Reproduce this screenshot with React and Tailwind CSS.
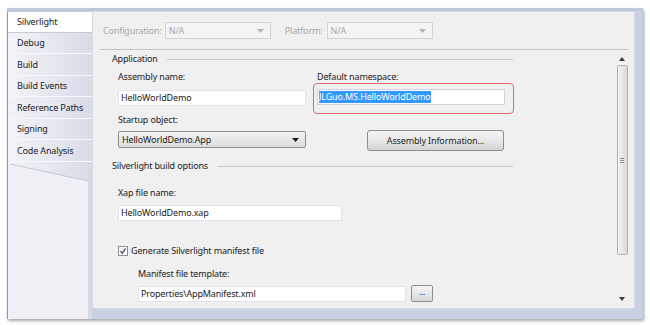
import React from "react";

const tabs = [
  "Silverlight",
  "Debug",
  "Build",
  "Build Events",
  "Reference Paths",
  "Signing",
  "Code Analysis",
];

function Combo({ value, disabled, className = "" }) {
  return (
    <div
      className={`flex items-center justify-between h-[17px] px-[3px] border ${
        disabled
          ? "border-[#d4d4d4] bg-[#f4f4f4] text-[#a8a8a8]"
          : "border-[#8e8f8f] bg-gradient-to-b from-[#f2f2f2] to-[#dcdcdc] text-[#1e1e1e] rounded-[2px]"
      } ${className}`}
    >
      <span>{value}</span>
      <svg width="7" height="4" viewBox="0 0 7 4" className="mr-[3px]">
        <path d="M0 0h7L3.5 4z" fill={disabled ? "#b4b4b4" : "#1e1e1e"} />
      </svg>
    </div>
  );
}

function TextBox({ value, className = "" }) {
  return (
    <div
      className={`h-[16px] flex items-center px-[2px] bg-white border border-[#e2e3ea] ${className}`}
    >
      {value}
    </div>
  );
}

function GroupHeader({ title }) {
  return (
    <div className="flex items-center h-[14px] ml-[19px] w-[401px]">
      <span className="mr-[9px]">{title}</span>
      <div className="flex-1 h-px bg-[#c9c9c9]" />
    </div>
  );
}

function Label({ children, className = "" }) {
  return <div className={`h-[14px] flex items-center ${className}`}>{children}</div>;
}

function Scrollbar() {
  return (
    <div className="w-[12px] h-full flex flex-col items-center bg-[#f0f0f0]">
      <svg width="6" height="4" viewBox="0 0 6 4" className="mt-[5px]">
        <path d="M0 4h6L3 0z" fill="#3a3a3a" />
      </svg>
      <div className="mt-[4px] w-[11px] h-[190px] rounded-[2px] border border-[#b0b0b0] bg-gradient-to-r from-[#f4f4f4] via-[#e6e6e6] to-[#d8d8d8] flex items-center justify-center">
        <div className="flex flex-col gap-[1px]">
          <div className="w-[4px] h-px bg-[#8c8c8c]" />
          <div className="w-[4px] h-px bg-[#8c8c8c]" />
          <div className="w-[4px] h-px bg-[#8c8c8c]" />
        </div>
      </div>
      <div className="flex-1" />
      <svg width="6" height="4" viewBox="0 0 6 4" className="mb-[6px]">
        <path d="M0 0h6L3 4z" fill="#3a3a3a" />
      </svg>
    </div>
  );
}

function TabColumn() {
  return (
    <div className="w-[85px] flex flex-col bg-gradient-to-r from-[#f3f4f8] to-[#d8dce7] border-l border-[#8f99ad] rounded-tl-[3px]">
      {tabs.map((t, i) => (
        <div
          key={t}
          className={`h-[21.5px] flex items-center pl-[9px] ${
            i === 0
              ? "bg-white border-y border-[#c6cbd8] -mr-[1px]"
              : "border-b border-[#f7f8fb]"
          }`}
        >
          {t}
        </div>
      ))}
      <svg
        width="85"
        height="150"
        viewBox="0 0 85 150"
        className="flex-1"
        preserveAspectRatio="none"
      >
        <path d="M0 2L80 18V150H0z" fill="#eef0f5" />
        <path d="M2 2L80 18" stroke="#c4c9d6" strokeWidth="1" fill="none" />
        <rect x="80" y="0" width="5" height="150" fill="#d6dae5" />
      </svg>
    </div>
  );
}

export default function App() {
  return (
    <div
      className="w-[650px] h-[325px] bg-white pl-[7px] pt-[8px] text-[9px] tracking-[-0.15px] text-[#222]"
      style={{ fontFamily: '"Segoe UI", "Noto Sans", sans-serif' }}
    >
      <div className="w-[636px] h-[311px] flex border-t-[3px] border-r-[1px] border-[#bfc8da] shadow-[1px_2px_3px_rgba(0,0,0,0.35)] bg-[#c9d1e2]">
        <TabColumn />
        {/* content page */}
        <div className="flex-1 flex flex-col pr-[7px] pb-[10px] bg-[#c9d1e2]">
          <div className="flex-1 flex flex-col bg-[#f0f0f0] border border-[#d6d9e1]">
            {/* configuration row */}
            <div className="h-[37px] flex items-center pl-[10px] text-[#a8a8a8]">
              <span>Configuration:</span>
              <Combo value="N/A" disabled className="ml-[3px] w-[106px]" />
              <span className="ml-[14px]">Platform:</span>
              <Combo value="N/A" disabled className="ml-[4px] w-[106px]" />
            </div>
            <div className="ml-[7px] mr-[6px] h-px bg-[#c4c4c4]" />
            {/* scroll area */}
            <div className="flex-1 flex pt-[2px]">
              <div className="flex-1 flex flex-col">
                <GroupHeader title="Application" />
                <div className="flex ml-[25px] mt-[4px]">
                  <div className="w-[188px] flex flex-col">
                    <Label>Assembly name:</Label>
                    <TextBox value="HelloWorldDemo" className="mt-[6px]" />
                    <Label className="mt-[7px]">Startup object:</Label>
                    <Combo value="HelloWorldDemo.App" className="mt-[4px] h-[16px]" />
                  </div>
                  <div className="ml-[11px] w-[188px] flex flex-col">
                    <Label>Default namespace:</Label>
                    <div className="relative mt-[5px]">
                      <div className="absolute -left-[4px] -top-[6px] w-[201px] h-[31px] border border-[#e06a6a] rounded-[4px]" />
                      <div className="h-[16px] flex items-center px-[1px] bg-white border border-[#cfd3dc]">
                        <span className="bg-[#3399ff] text-white leading-[12px]">
                          JLGuo.MS.HelloWorldDemo
                        </span>
                      </div>
                    </div>
                    <button className="mt-[25px] ml-[50px] w-[137px] h-[21px] border border-[#8e8f8f] rounded-[3px] bg-gradient-to-b from-[#f5f5f5] via-[#e8e8e8] to-[#d4d4d4] text-[#1e1e1e]">
                      Assembly Information...
                    </button>
                  </div>
                </div>
                <div className="mt-[8px]">
                  <GroupHeader title="Silverlight build options" />
                </div>
                <div className="ml-[25px] mt-[13px] flex flex-col">
                  <Label>Xap file name:</Label>
                  <TextBox value="HelloWorldDemo.xap" className="mt-[5px] w-[224px]" />
                  <div className="flex items-center mt-[24px] h-[12px]">
                    <div className="w-[10px] h-[10px] border border-[#8f8f8f] bg-gradient-to-br from-[#f0f0f0] to-white flex items-center justify-center">
                      <svg width="8" height="8" viewBox="0 0 8 8">
                        <path d="M1.5 4.2L3.3 6.2L6.6 1.5" stroke="#3b4a6b" strokeWidth="1.3" fill="none" />
                      </svg>
                    </div>
                    <span className="ml-[3px]">Generate Silverlight manifest file</span>
                  </div>
                  <div className="ml-[20px] flex flex-col">
                    <Label className="mt-[10px]">Manifest file template:</Label>
                    <div className="flex items-center mt-[4px]">
                      <TextBox value="Properties\AppManifest.xml" className="w-[268px]" />
                      <button className="ml-[5px] w-[22px] h-[17px] border border-[#8e8f8f] rounded-[2px] bg-gradient-to-b from-[#f5f5f5] to-[#d8d8d8] text-[8px] leading-[8px] pb-[3px]">
                        ...
                      </button>
                    </div>
                  </div>
                </div>
              </div>
              <div className="mr-[6px] pb-[1px]">
                <Scrollbar />
              </div>
            </div>
          </div>
        </div>
      </div>
    </div>
  );
}
